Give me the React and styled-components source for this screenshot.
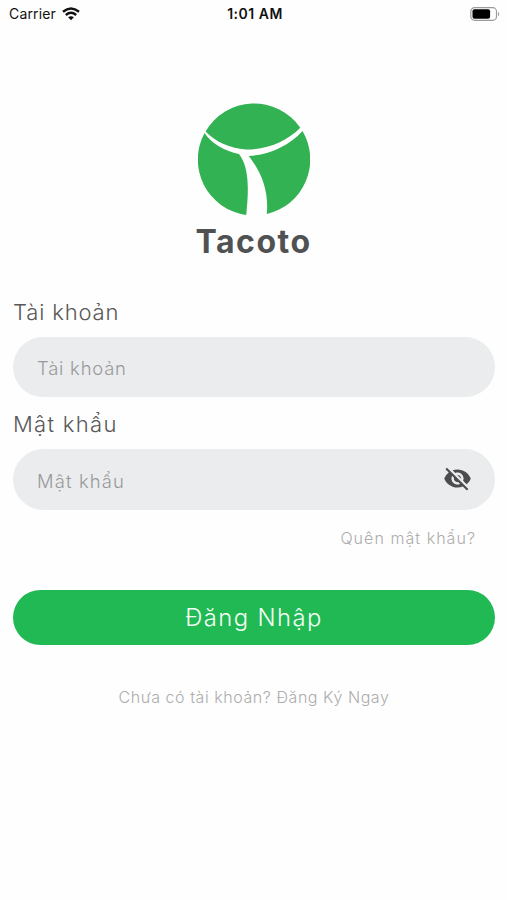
import { useState } from "react"
import styled, { createGlobalStyle } from "styled-components"
import { MdVisibility, MdVisibilityOff } from "react-icons/md"

export default function App() {
    const [username, setUsername] = useState("")
    const [password, setPassword] = useState("")
    const [hidden, setHidden] = useState(true)

    function handleForm(event) {
        event.preventDefault()
    }

    return (
        <>
            <GlobalStyle />
            <Screen>
                <StatusBar>
                    <Carrier>
                        <span>Carrier</span>
                        <WifiIcon />
                    </Carrier>
                    <Clock>1:01 AM</Clock>
                    <BatteryIcon />
                </StatusBar>

                <Brand>
                    <Logo />
                    <Title>Tacoto</Title>
                </Brand>

                <Form onSubmit={handleForm}>
                    <Label htmlFor="username" $spacing="0.85px">Tài khoản</Label>
                    <Field $height="60px">
                        <Input id="username" placeholder="Tài khoản" $spacing="0.8px" onChange={e => setUsername(e.target.value)} value={username} />
                    </Field>

                    <Label htmlFor="password" $spacing="1.3px">Mật khẩu</Label>
                    <Field $height="61px">
                        <Input id="password" type={hidden ? "password" : "text"} placeholder="Mật khẩu" $spacing="1.15px" onChange={e => setPassword(e.target.value)} value={password} />
                        <EyeButton type="button" onClick={() => setHidden(!hidden)}>
                            {hidden ? <MdVisibilityOff /> : <MdVisibility />}
                        </EyeButton>
                    </Field>

                    <ForgotLink href="#">Quên mật khẩu?</ForgotLink>
                    <SubmitButton>Đăng Nhập</SubmitButton>
                    <RegisterLink href="#">Chưa có tài khoản? Đăng Ký Ngay</RegisterLink>
                </Form>
            </Screen>
        </>
    )
}

function WifiIcon() {
    return (
        <svg width="18" height="14" viewBox="0 0 18 14" fill="none" stroke="#111" strokeWidth="2.4">
            <path d="M1 4.7Q9 -1.9 17 4.7" />
            <path d="M3.8 8Q9 3.7 14.2 8" />
            <path d="M9 13.2L6.1 10.3Q9 8 11.9 10.3Z" fill="#111" stroke="none" />
        </svg>
    )
}

function BatteryIcon() {
    return (
        <svg width="31" height="14" viewBox="0 0 31 14">
            <rect x="0.8" y="0.7" width="25.7" height="12.6" rx="3.8" fill="none" stroke="#9b9b9b" strokeWidth="1.2" />
            <rect x="2.5" y="2.3" width="17.6" height="9.4" rx="2" fill="#000" />
            <path d="M28 4.7Q30.4 7 28 9.3Z" fill="#9b9b9b" />
        </svg>
    )
}

function Logo() {
    return (
        <svg width="112" height="114" viewBox="0 0 112 114" fill="#32b252">
            <path d="M7.6 29.5A56 56 0 0 1 102.3 25.8C88 40 69 47.6 48 47.6C31 46 17 39.5 7.6 29.5Z" />
            <path d="M6.5 31A56 56 0 0 0 48.2 113C50.5 91 52 66 41 52C27 49 14 42 6.5 31Z" />
            <path d="M104.5 29A56 56 0 0 1 68.8 112C71 88 63 70 50.8 54C71 53 91 44 104.5 29Z" />
        </svg>
    )
}

const GlobalStyle = createGlobalStyle`
    * {
        box-sizing: border-box;
    }

    body {
        margin: 0;
        background-color: #fefefe;
        font-family: Inter, sans-serif;
    }
`

const Screen = styled.main`
    width: 507px;
    height: 900px;
    overflow: hidden;
    background-color: #fefefe;
`

const StatusBar = styled.header`
    height: 27px;
    padding: 0 6px 0 9px;
    display: grid;
    grid-template-columns: 1fr auto 1fr;
    align-items: center;
    color: #111;
    font-size: 14px;

    > svg {
        justify-self: end;
    }
`

const Carrier = styled.div`
    display: flex;
    align-items: center;
    gap: 6px;
    letter-spacing: 0.15px;
`

const Clock = styled.span`
    font-weight: 600;
    letter-spacing: 0.5px;
`

const Brand = styled.div`
    margin-top: 75px;
    display: flex;
    flex-direction: column;
    align-items: center;
`

const Title = styled.h1`
    margin: 6px 0 0;
    color: #505152;
    font-size: 32px;
    font-weight: 700;
    line-height: 40px;
    letter-spacing: 1.5px;
`

const Form = styled.form`
    padding: 0 12px 0 13px;
    margin-top: 35px;
    display: flex;
    flex-direction: column;
`

const Label = styled.label`
    height: 40px;
    color: #585858;
    font-size: 22px;
    font-weight: 300;
    line-height: 30px;
    letter-spacing: ${props => props.$spacing};
`

const Field = styled.div`
    height: ${props => props.$height};
    margin-bottom: 12px;
    padding: 0 23px 0 24px;
    display: flex;
    align-items: center;
    border-radius: 31px;
    background-color: #eaeced;
`

const Input = styled.input`
    flex: 1;
    min-width: 0;
    padding: 2px 0 0;
    border: 0;
    outline: 0;
    background: none;
    color: #5c5c5c;
    font-family: inherit;
    font-size: 18.4px;
    font-weight: 300;
    letter-spacing: ${props => props.$spacing};

    &::placeholder {
        color: #98999a;
        opacity: 1;
    }
`

const EyeButton = styled.button`
    padding: 0;
    margin-bottom: 3px;
    border: 0;
    display: flex;
    background: none;
    color: #4b4c4d;
    font-size: 29px;
`

const ForgotLink = styled.a`
    margin: 5px 19px 0 0;
    align-self: flex-end;
    color: #acacac;
    font-size: 16px;
    font-weight: 300;
    line-height: 22px;
    letter-spacing: 1.05px;
    text-decoration: none;
`

const SubmitButton = styled.button`
    height: 55px;
    margin-top: 41px;
    border: 0;
    border-radius: 28px;
    background-color: #20b954;
    color: #f4fff6;
    font-family: inherit;
    font-size: 23.8px;
    font-weight: 300;
    letter-spacing: 1.4px;
`

const RegisterLink = styled.a`
    margin-top: 41px;
    align-self: center;
    color: #acacac;
    font-size: 16px;
    font-weight: 300;
    line-height: 22px;
    letter-spacing: 0.56px;
    text-decoration: none;
`
